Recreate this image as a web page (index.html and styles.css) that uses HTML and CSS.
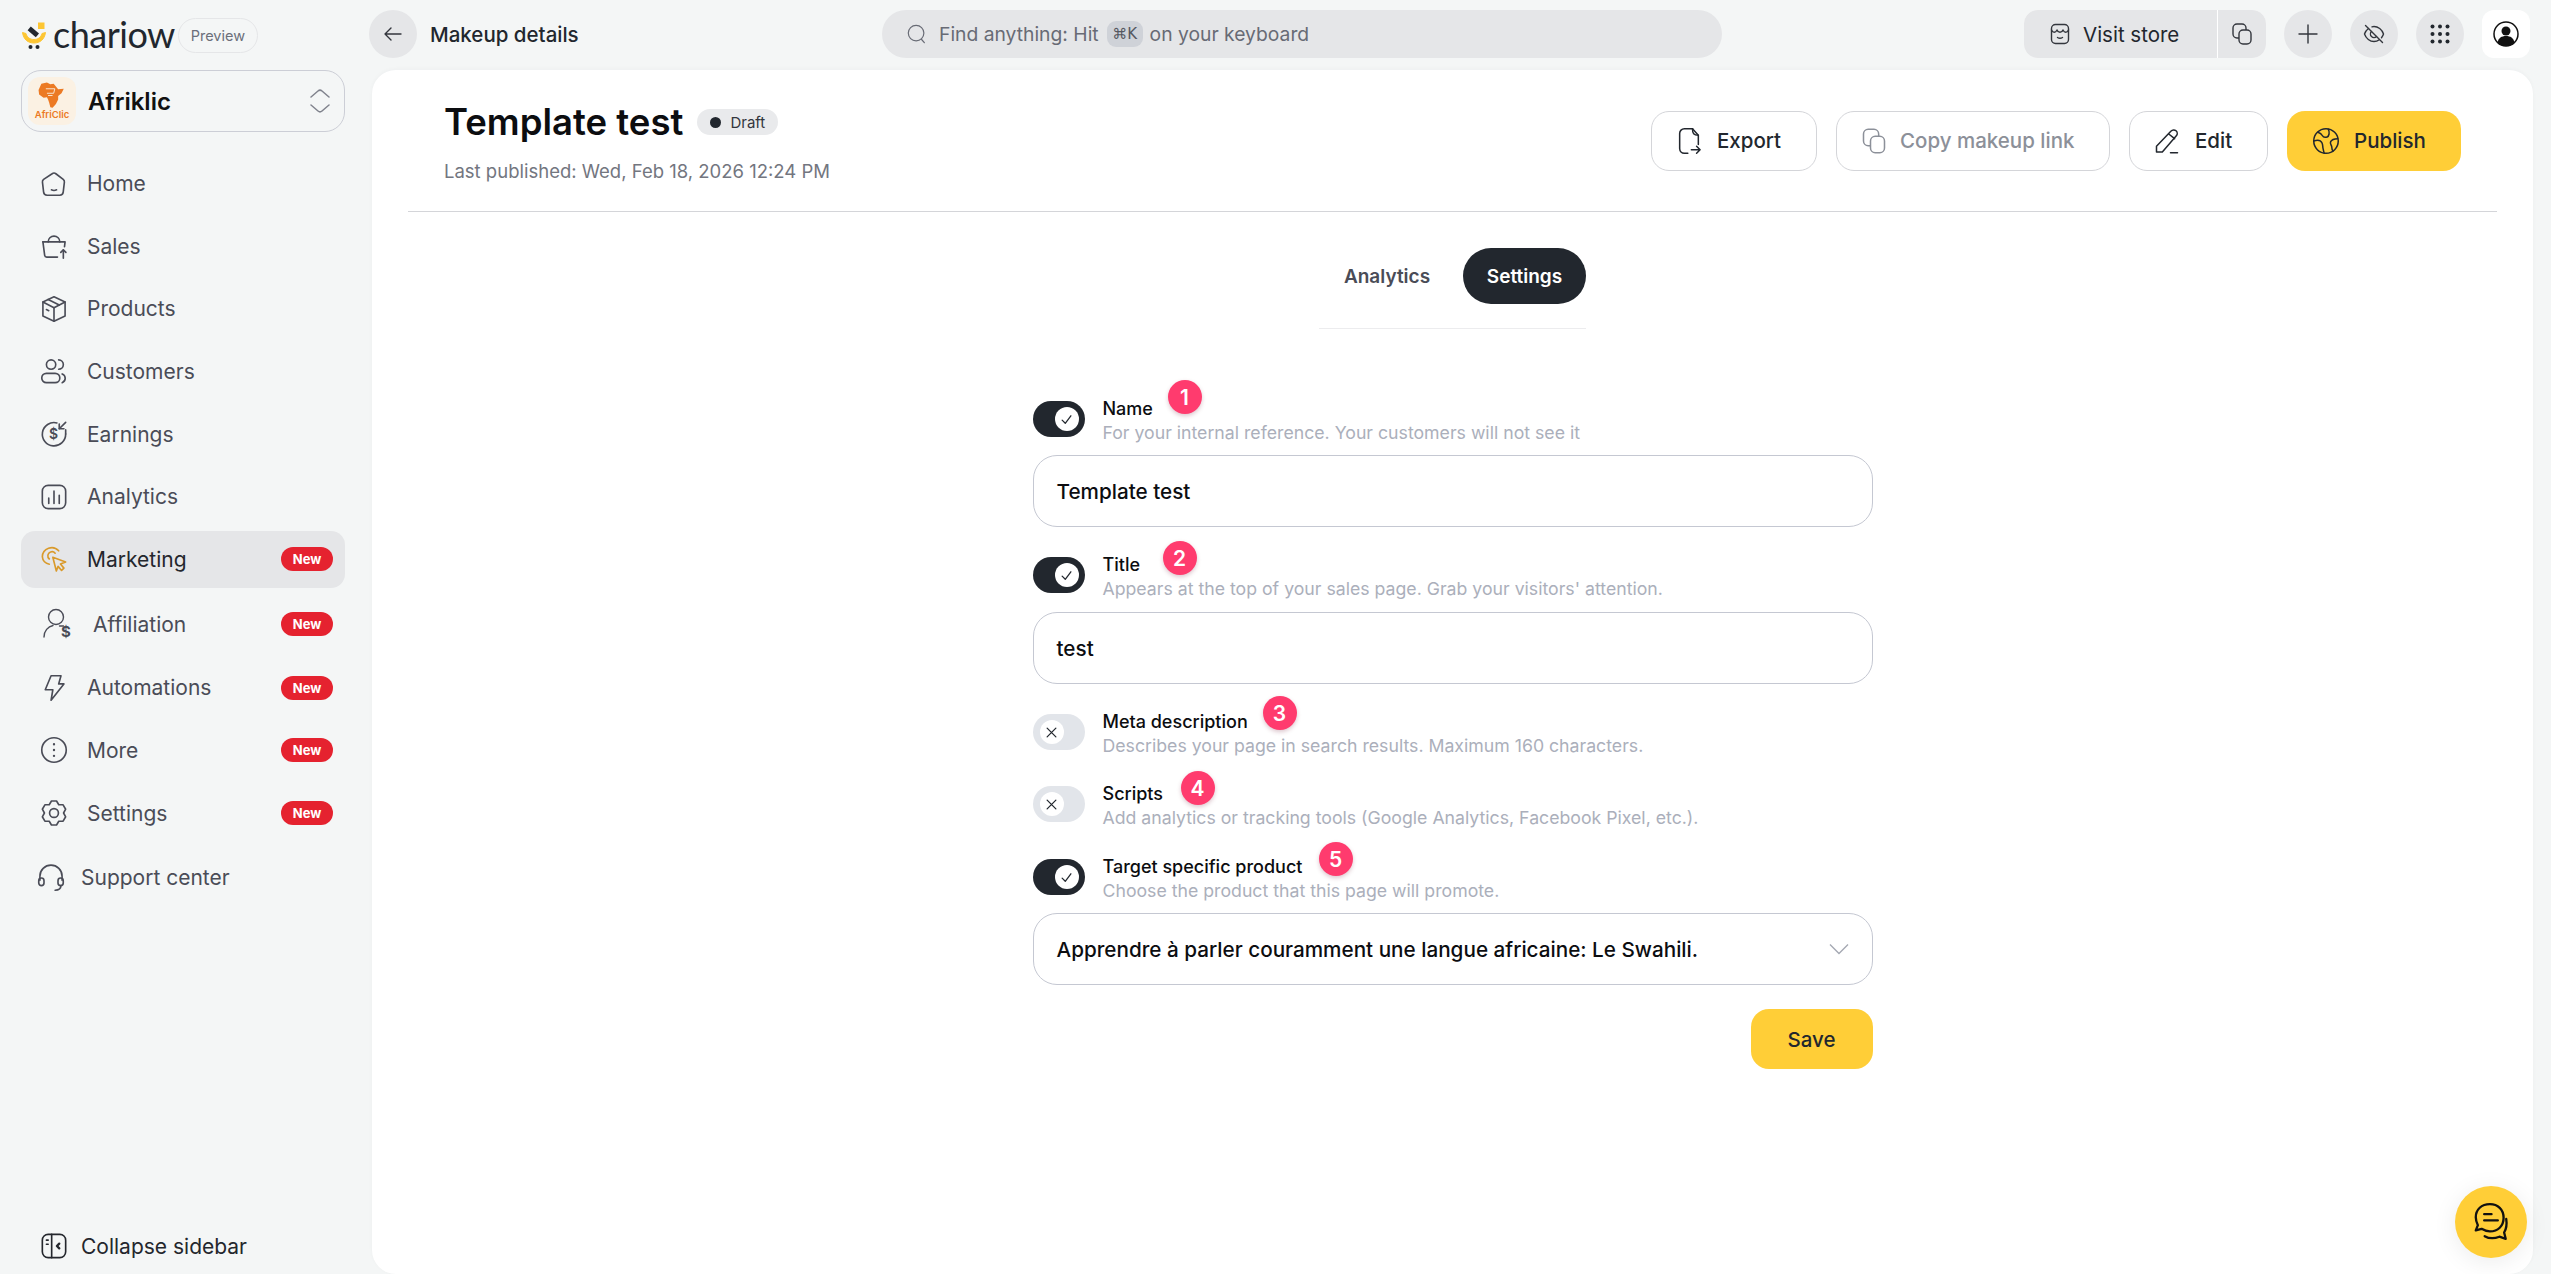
FILE: index.html
```html
<!DOCTYPE html>
<html lang="en">
<head>
  <meta charset="UTF-8">
  <meta name="viewport" content="width=device-width, initial-scale=1.0">
  <title>Makeup details</title>
  <link rel="stylesheet" href="styles.css">
</head>
<body>
  <aside class="sidebar">
    <div class="brand">
      <svg class="brand-mark" viewBox="0 0 26 28">
        <path d="M1.5 10.5c1 7 5.500 10.500 11.500 10.500s10.500-3.500 11.500-10.500l-3.500 1c-1 4-4 6-8 6s-7-2-8-6z" fill="#fdc633" stroke="#fdc633" stroke-linejoin="round"/>
        <path d="M9.8 4.500l8.200 7-3.200 3.700-8.200-7z" fill="#22272e"/>
        <rect x="17" y="0.5" width="6.500" height="6.500" fill="#fdc633"/>
        <circle cx="9.500" cy="25" r="2" fill="#22272e"/>
        <circle cx="16.500" cy="25" r="2" fill="#22272e"/>
      </svg>
      <span class="brand-name">chariow</span>
      <span class="preview-pill">Preview</span>
    </div>

    <div class="store-select">
      <div class="store-logo">
        <svg viewBox="5 0 25 24" class="store-africa">
          <path d="M8 1.500l5-1 3 1.500 3-.5 2 2.500 2 2.500 5-.5-2 4-3 2.500v3l-2 4-3 3.500-2-.5-1-4-1-3-1-2-3 .5-4-3-.5-4z" fill="#ec7a24"/>
          <path d="M12 6h8l-1 4h-6M14 12h4" fill="none" stroke="#fbf1e3" stroke-width="0.8"/>
        </svg>
        <span class="store-logo-text">AfriClic</span>
      </div>
      <span class="store-name">Afriklic</span>
      <svg class="store-arrows" viewBox="0 0 20 24" fill="none" stroke="#80838d" stroke-width="1.5" stroke-linecap="round" stroke-linejoin="round"><path d="M1 8l7-6a3 3 0 0 1 4 0l7 6"/><path d="M1 16l7 6a3 3 0 0 0 4 0l7-6"/></svg>
    </div>

    <nav class="nav">
      <a class="nav-item">
        <svg class="nav-icon" viewBox="0 0 24 24"><path d="M10.400 2.700a2.600 2.600 0 0 1 3.200 0l6.300 4.800a2.600 2.600 0 0 1 1 2.400l-1 8.600a3 3 0 0 1-3 2.600H6.100a3 3 0 0 1-3-2.600l-1-8.600a2.600 2.600 0 0 1 1-2.400z" transform="translate(0 0.5)"/><path d="M9.800 17c1.400.7 3 .7 4.400 0"/></svg>
        <span>Home</span>
      </a>
      <a class="nav-item">
        <svg class="nav-icon" viewBox="0 0 24 24"><path d="M2.500 8.500h19l-.5 4"/><path d="M2.500 8.500L4 20a1.800 1.800 0 0 0 1.800 1.500H15"/><path d="M7 8.500a5 5 0 0 1 10 0"/><path d="M20 22.500v-7"/><path d="M17.800 17.500l2.200-2.200 2.200 2.200"/></svg>
        <span>Sales</span>
      </a>
      <a class="nav-item">
        <svg class="nav-icon" viewBox="0 0 24 24"><path d="M12 1.500l9.500 4.500v12L12 22.500 2.500 18V6z"/><path d="M2.500 6L12 11l9.500-5"/><path d="M12 11v11.500"/><path d="M7 3.800l9.500 4.800"/><path d="M5.500 12.500l2 1"/></svg>
        <span>Products</span>
      </a>
      <a class="nav-item">
        <svg class="nav-icon" viewBox="0 0 24 24"><circle cx="9.500" cy="6.500" r="4"/><rect x="1.500" y="14" width="15.500" height="8" rx="4"/><path d="M16 2.500a4 4 0 0 1 0 8"/><path d="M19 14.500a4 4 0 0 1 0 7.500"/></svg>
        <span>Customers</span>
      </a>
      <a class="nav-item">
        <svg class="nav-icon" viewBox="0 0 24 24"><path d="M14.500 2.500A10 10 0 1 0 22 12"/><path d="M22 8.500v3.500"/><path d="M22 2l-5.500 5.500"/><path d="M16.500 3.500v4h4"/><text x="7.700" y="16.300" class="icon-text">$</text></svg>
        <span>Earnings</span>
      </a>
      <a class="nav-item">
        <svg class="nav-icon" viewBox="0 0 24 24"><rect x="2" y="2" width="20" height="20" rx="5"/><path d="M7.500 13v4.500M12 7v10.500M16.500 10.500v7"/></svg>
        <span>Analytics</span>
      </a>
      <a class="nav-item nav-active">
        <svg class="nav-icon icon-orange" viewBox="0 0 24 24"><path d="M8 16.500A7 7 0 0 1 2 10a8 8 0 0 1 14-5"/><path d="M8 12a3.500 3.500 0 0 1 1-6 3.500 3.500 0 0 1 4 1"/><path d="M11 10.500l11 4-4.500 1.800 3 3.500-2 2-3-3.500-1.500 4z"/></svg>
        <span>Marketing</span>
        <span class="new-badge">New</span>
      </a>
      <a class="nav-item nav-affiliation">
        <svg class="nav-icon" viewBox="0 0 30 36"><circle cx="14" cy="11" r="7.500"/><path d="M2 31c0-6 4-10.500 9-11.500"/><path d="M17.500 20h4"/><text x="19" y="31" class="icon-text icon-text-bold">$</text></svg>
        <span>Affiliation</span>
        <span class="new-badge">New</span>
      </a>
      <a class="nav-item">
        <svg class="nav-icon" viewBox="0 0 24 24"><path d="M9.500 1.500h8.500l-2 7h4.500L9.500 22.500l1.500-9H4.500z"/></svg>
        <span>Automations</span>
        <span class="new-badge">New</span>
      </a>
      <a class="nav-item">
        <svg class="nav-icon" viewBox="0 0 24 24"><circle cx="12" cy="12" r="10.500"/><path d="M12 7v.1M12 12v.1M12 17v.1" stroke-width="2"/></svg>
        <span>More</span>
        <span class="new-badge">New</span>
      </a>
      <a class="nav-item">
        <svg class="nav-icon" viewBox="0 0 24 24"><path d="M9.820 1.730h4.360L16.100 4.900l3.700.07 2.190 3.790L20.200 12l1.790 3.240-2.190 3.790-3.700.07-1.920 3.170H9.820L7.900 19.100l-3.700-.07-2.190-3.790L3.800 12 2.010 8.760l2.190-3.790 3.700-.07z"/><circle cx="12" cy="12" r="3.800"/></svg>
        <span>Settings</span>
        <span class="new-badge">New</span>
      </a>
      <a class="nav-item nav-support">
        <svg class="nav-icon" viewBox="0 0 24 24"><path d="M2.500 14V10.500a9.500 9.500 0 0 1 19 0V14"/><rect x="1.500" y="12" width="4.500" height="6.500" rx="2.250"/><rect x="18" y="12" width="4.500" height="6.500" rx="2.250"/><path d="M20.500 18.500c0 2.500-2 4-5 4"/></svg>
        <span>Support center</span>
      </a>
    </nav>

    <a class="collapse-link">
      <svg class="nav-icon" viewBox="0 0 24 24"><rect x="2" y="2" width="20" height="20" rx="5"/><path d="M10 2v20M5.500 7h1.500M5.500 10.500h1.500"/><path d="M16.500 10l-2 2 2 2" stroke-width="2"/></svg>
      <span>Collapse sidebar</span>
    </a>
  </aside>

  <div class="workspace">
    <header class="topbar">
      <div class="topbar-left">
        <button class="round-btn">
          <svg class="top-icon" viewBox="0 0 24 24"><path d="M20 12H4M10 6l-6 6 6 6"/></svg>
        </button>
        <span class="page-name">Makeup details</span>
      </div>
      <div class="search">
        <svg class="search-icon" viewBox="0 0 24 24"><circle cx="11" cy="11" r="8.500"/><path d="M17 18l3 3.500"/></svg>
        <span>Find anything: Hit</span>
        <kbd class="kbd">⌘K</kbd>
        <span>on your keyboard</span>
      </div>
      <div class="topbar-right">
        <div class="store-group">
          <button class="visit-btn">
            <svg class="top-icon" viewBox="0 0 24 24"><rect x="3.500" y="2.500" width="17" height="19" rx="4"/><path d="M3.500 8c1.500 3 4 3 5.500 0 1 3 5 3 6 0 1.500 3 4 3 5.500 0"/><path d="M9.500 15.500c1.500 1 3.500 1 5 0"/></svg>
            <span>Visit store</span>
          </button>
          <button class="copy-btn">
            <svg class="top-icon" viewBox="0 0 24 24"><rect x="3" y="2" width="13" height="14" rx="4"/><rect x="9" y="8" width="12" height="14" rx="4" fill="#e5e6e8"/></svg>
          </button>
        </div>
        <button class="round-btn">
          <svg class="top-icon" viewBox="0 0 24 24"><path d="M12 3v18M3 12h18"/></svg>
        </button>
        <button class="round-btn">
          <svg class="top-icon" viewBox="0 0 24 24"><path d="M3.500 3.500l17 17"/><path d="M6.500 6.500C4.500 8 3 10 2.500 12c1.500 4.500 5.500 7.500 9.500 7.500 2 0 3.800-.7 5.300-1.800"/><path d="M10 4.800c.7-.2 1.300-.3 2-.3 4 0 8 3 9.500 7.500-.4 1.300-1.100 2.600-2 3.700"/><path d="M9.500 9.500a3.500 3.500 0 0 0 5 5"/></svg>
        </button>
        <button class="round-btn">
          <svg class="top-icon" viewBox="0 0 24 24"><g class="dots"><circle cx="4.500" cy="4.500" r="2"/><circle cx="12" cy="4.500" r="2"/><circle cx="19.500" cy="4.500" r="2"/><circle cx="4.500" cy="12" r="2"/><circle cx="12" cy="12" r="2"/><circle cx="19.500" cy="12" r="2"/><circle cx="4.500" cy="19.500" r="2"/><circle cx="12" cy="19.500" r="2"/><circle cx="19.500" cy="19.500" r="2"/></g></svg>
        </button>
        <button class="avatar-btn">
          <svg class="avatar-icon" viewBox="0 0 26 26"><circle cx="13" cy="13" r="12" fill="#fff" stroke="#111" stroke-width="1.5"/><circle cx="13" cy="10" r="4.500" fill="#111"/><path d="M4.500 21.500c1-4.500 4-6.500 8.500-6.500s7.500 2 8.500 6.500a12 12 0 0 1-17 0z" fill="#111"/></svg>
        </button>
      </div>
    </header>

    <main class="card">
      <section class="page-head">
        <div class="page-head-text">
          <div class="title-line">
            <h1>Template test</h1>
            <span class="status-pill"><i class="status-dot"></i>Draft</span>
          </div>
          <p class="published">Last published: Wed, Feb 18, 2026 12:24 PM</p>
        </div>
        <div class="actions">
          <button class="btn btn-export">
            <svg class="btn-icon" viewBox="0 0 24 24"><path d="M15 1.500H8a4 4 0 0 0-4 4v13a4 4 0 0 0 4 4h3"/><path d="M15 1.500l5 5.500v8"/><path d="M15 1.500c0 4 1 5.500 5 5.500"/><path d="M14 19.500h7M18.500 16.500l3 3-3 3"/></svg>
            <span>Export</span>
          </button>
          <button class="btn btn-copy">
            <svg class="btn-icon" viewBox="0 0 24 24"><rect x="3" y="2" width="13" height="14" rx="4"/><rect x="9" y="8" width="12" height="14" rx="4" fill="#fff"/></svg>
            <span>Copy makeup link</span>
          </button>
          <button class="btn btn-edit">
            <svg class="btn-icon" viewBox="0 0 24 24"><path d="M15.500 3.500a3 3 0 0 1 4.500 4L8 21.500H3V16.500z"/><path d="M13.500 6l5 4"/><path d="M15 22h6"/></svg>
            <span>Edit</span>
          </button>
          <button class="btn btn-publish">
            <svg class="btn-icon" viewBox="0 0 24 24"><circle cx="12" cy="12" r="10.500"/><path d="M5 4.500c2 .5 3 1 4 3s2.500 1.500 4 1 2.500-4 1-6.500"/><path d="M1.500 12c3-1 6-.5 7 1.500s.5 3 1 5 .5 3 1 4"/><path d="M22 10c-3 0-5 .5-6 2.500s1 3 1 5 .5 2.500 1 3"/></svg>
            <span>Publish</span>
          </button>
        </div>
      </section>

      <div class="tabs">
        <button class="tab">Analytics</button>
        <button class="tab tab-active">Settings</button>
      </div>

      <form class="form">
        <div class="field">
          <div class="field-head">
            <span class="toggle toggle-on"><span class="knob"><svg viewBox="0 0 12 12"><path d="M2.500 6.500L5 9l4.500-6"/></svg></span></span>
            <div class="field-text">
              <label>Name</label>
              <small>For your internal reference. Your customers will not see it</small>
            </div>
          </div>
          <span class="step step-1">1</span>
          <div class="input">Template test</div>
        </div>

        <div class="field field-title">
          <div class="field-head">
            <span class="toggle toggle-on"><span class="knob"><svg viewBox="0 0 12 12"><path d="M2.500 6.500L5 9l4.500-6"/></svg></span></span>
            <div class="field-text">
              <label>Title</label>
              <small>Appears at the top of your sales page. Grab your visitors' attention.</small>
            </div>
          </div>
          <span class="step step-2">2</span>
          <div class="input">test</div>
        </div>

        <div class="field">
          <div class="field-head">
            <span class="toggle"><span class="knob"><svg viewBox="0 0 12 12"><path d="M2.500 2.500l7 7M9.500 2.500l-7 7"/></svg></span></span>
            <div class="field-text">
              <label>Meta description</label>
              <small>Describes your page in search results. Maximum 160 characters.</small>
            </div>
          </div>
          <span class="step step-3">3</span>
        </div>

        <div class="field field-scripts">
          <div class="field-head">
            <span class="toggle"><span class="knob"><svg viewBox="0 0 12 12"><path d="M2.500 2.500l7 7M9.500 2.500l-7 7"/></svg></span></span>
            <div class="field-text">
              <label>Scripts</label>
              <small>Add analytics or tracking tools (Google Analytics, Facebook Pixel, etc.).</small>
            </div>
          </div>
          <span class="step step-4">4</span>
        </div>

        <div class="field field-target">
          <div class="field-head">
            <span class="toggle toggle-on"><span class="knob"><svg viewBox="0 0 12 12"><path d="M2.500 6.500L5 9l4.500-6"/></svg></span></span>
            <div class="field-text">
              <label>Target specific product</label>
              <small>Choose the product that this page will promote.</small>
            </div>
          </div>
          <span class="step step-5">5</span>
          <div class="input input-select">
            <span>Apprendre à parler couramment une langue africaine: Le Swahili.</span>
            <svg class="select-arrow" viewBox="0 0 20 12"><path d="M1 1.500l9 9 9-9"/></svg>
          </div>
        </div>

        <div class="form-foot">
          <button type="button" class="btn btn-save">Save</button>
        </div>
      </form>

      <button class="chat-btn">
        <svg viewBox="0 0 40 40" class="chat-icon"><path d="M19 3c-8 0-13.500 5-13.500 12.500 0 3 1 5.500 2 7.500l-2 5 5.500-1.500c2.500 1.500 5 2.500 8 2.500 7.500 0 13-5 13-13S26.500 3 19 3z"/><path d="M13.500 12.500h7M13.500 18.500h13"/><path d="M34.500 17c1 6.500-.5 10.500-2 13l1.500 6-6-2c-4.500 1.800-10 1.800-14-.5"/></svg>
      </button>
    </main>
  </div>
</body>
</html>
```

FILE: styles.css
```css
* {
  box-sizing: border-box;
}

html, body {
  height: 100%;
}

body {
  margin: 0;
  display: flex;
  overflow: hidden;
  background: #f4f6f6;
  color: #22272e;
  font-family: "Inter", "Liberation Sans", sans-serif;
}

button {
  border: none;
  background: none;
  padding: 0;
  font: inherit;
  color: inherit;
  cursor: pointer;
}

svg {
  display: block;
  flex: none;
}

/* Sidebar */
.sidebar {
  width: 372px;
  flex: none;
  display: flex;
  flex-direction: column;
  padding: 0 27px 0 21px;
}

.brand {
  height: 70px;
  display: flex;
  align-items: center;
}

.brand-mark {
  width: 26px;
  height: 28px;
  margin-top: 1px;
}

.brand-name {
  margin-left: 6px;
  margin-top: -3px;
  font-family: "Lato", sans-serif;
  font-size: 36px;
  letter-spacing: -0.5px;
  line-height: 1;
  color: #22272e;
}

.preview-pill {
  margin-left: 3px;
  height: 35px;
  width: 80px;
  border: 1px solid #e5e6e8;
  border-radius: 18px;
  display: flex;
  align-items: center;
  justify-content: center;
  font-size: 14.5px;
  color: #6b6f7a;
}

.store-select {
  height: 62px;
  border: 1px solid #ccced6;
  border-radius: 20px;
  display: flex;
  align-items: center;
  padding: 0 14px 0 6px;
}

.store-logo {
  width: 48px;
  height: 48px;
  border-radius: 12px;
  background: #fbf1e3;
  display: flex;
  flex-direction: column;
  align-items: center;
  padding-top: 5px;
}

.store-africa {
  width: 28px;
  height: 27px;
}

.store-logo-text {
  font-size: 9.5px;
  font-weight: 600;
  color: #ec7a24;
  line-height: 11px;
}

.store-name {
  margin-left: 12px;
  font-size: 24px;
  font-weight: 600;
  color: #111;
  flex: 1;
}

.store-arrows {
  width: 20px;
  height: 24px;
}

.nav {
  margin-top: 23px;
  display: flex;
  flex-direction: column;
  gap: 5.67px;
}

.nav-item {
  height: 57px;
  display: flex;
  align-items: center;
  padding: 0 12px 0 19px;
  border-radius: 14px;
  font-size: 21px;
  color: #4a4c57;
}

.nav-icon {
  width: 28px;
  height: 28px;
  margin-right: 19px;
  fill: none;
  stroke: currentColor;
  stroke-width: 1.4;
  stroke-linecap: round;
  stroke-linejoin: round;
}

.icon-text {
  font-family: "Inter", sans-serif;
  font-size: 12px;
  fill: currentColor;
  stroke: none;
  font-weight: 600;
}

.icon-text-bold {
  font-size: 15px;
  font-weight: 700;
}

.icon-orange {
  color: #d99a2b;
}

.nav-active {
  background: #e5e6e8;
  color: #24272d;
}

.nav-affiliation {
  height: 59px;
  margin-top: 1px;
}

.nav-affiliation .nav-icon {
  width: 30px;
  height: 36px;
  margin-left: 2px;
  margin-right: 21px;
}

.nav-support {
  margin-top: 2px;
  padding-left: 16px;
}

.nav-support .nav-icon {
  margin-right: 16px;
}

.new-badge {
  margin-left: auto;
  width: 52px;
  height: 24px;
  border-radius: 12px;
  background: #e5222f;
  color: #fff;
  font-size: 13px;
  font-weight: 700;
  display: flex;
  align-items: center;
  justify-content: center;
}

.collapse-link {
  margin-top: auto;
  margin-bottom: 14px;
  padding-left: 19px;
  height: 28px;
  display: flex;
  align-items: center;
  font-size: 21px;
  color: #24272d;
}

.collapse-link .nav-icon {
  margin-right: 13px;
}

/* Top bar */
.workspace {
  flex: 1;
  min-width: 0;
  display: flex;
  flex-direction: column;
}

.topbar {
  height: 70px;
  flex: none;
  display: flex;
  align-items: flex-start;
  padding: 10px 21px 0 0;
  margin-left: -3px;
}

.topbar-left {
  width: 513px;
  display: flex;
  align-items: center;
  gap: 13px;
}

.round-btn {
  width: 48px;
  height: 48px;
  border-radius: 50%;
  background: #e5e6e8;
  display: flex;
  align-items: center;
  justify-content: center;
}

.top-icon {
  width: 24px;
  height: 24px;
  fill: none;
  stroke: #33363d;
  stroke-width: 1.4;
  stroke-linecap: round;
  stroke-linejoin: round;
}

.dots {
  fill: #22272e;
  stroke: none;
}

.page-name {
  font-size: 20.5px;
  font-weight: 500;
  color: #22272e;
}

.search {
  width: 840px;
  height: 48px;
  border-radius: 24px;
  background: #e5e6e8;
  display: flex;
  align-items: center;
  padding-left: 24px;
  font-size: 19.3px;
  color: #686b75;
}

.search-icon {
  width: 22px;
  height: 24px;
  margin-right: 11px;
  fill: none;
  stroke: #686b75;
  stroke-width: 1.3;
  stroke-linecap: round;
}

.kbd {
  width: 36px;
  height: 26px;
  margin: 0 7px 0 8px;
  border-radius: 9px;
  background: #cfd2d8;
  font-family: "DejaVu Sans", sans-serif;
  font-size: 15px;
  color: #555861;
  display: flex;
  align-items: center;
  justify-content: center;
}

.topbar-right {
  margin-left: auto;
  display: flex;
  gap: 18px;
}

.store-group {
  display: flex;
  gap: 1px;
  background: #fff;
  border-radius: 14px;
}

.visit-btn {
  width: 193px;
  height: 48px;
  border-radius: 14px 0 0 14px;
  background: #e5e6e8;
  display: flex;
  align-items: center;
  gap: 11px;
  padding-left: 24px;
  font-size: 20.5px;
  color: #22272e;
}

.copy-btn {
  width: 48px;
  height: 48px;
  border-radius: 0 14px 14px 0;
  background: #e5e6e8;
  display: flex;
  align-items: center;
  justify-content: center;
}

.avatar-btn {
  width: 48px;
  height: 48px;
  border-radius: 12px;
  background: #fff;
  display: flex;
  align-items: center;
  justify-content: center;
}

.avatar-icon {
  width: 26px;
  height: 26px;
}

/* Main card */
.card {
  flex: 1;
  min-height: 0;
  width: 2161px;
  position: relative;
  background: #fff;
  border-radius: 24px;
  box-shadow: 0 -1px 4px rgba(30, 40, 50, 0.03);
}

.page-head {
  height: 142px;
  margin: 0 36px;
  border-bottom: 1px solid #d4d5d9;
  display: flex;
  justify-content: space-between;
  align-items: flex-start;
}

.page-head-text {
  padding: 30px 0 0 36px;
}

.title-line {
  display: flex;
  align-items: center;
  gap: 14px;
  height: 44px;
}

h1 {
  margin: 0;
  font-size: 36.5px;
  font-weight: 600;
  color: #0c0d10;
}

.status-pill {
  width: 81px;
  height: 26px;
  border-radius: 13px;
  background: #e9eaec;
  display: flex;
  align-items: center;
  justify-content: center;
  gap: 9px;
  font-size: 15px;
  color: #33363d;
}

.status-dot {
  width: 11px;
  height: 11px;
  border-radius: 50%;
  background: #22272e;
}

.published {
  margin: 16px 0 0;
  font-size: 18.5px;
  color: #73767f;
}

.actions {
  margin-top: 41px;
  margin-right: 36px;
  display: flex;
  gap: 19px;
}

.btn {
  height: 60px;
  border-radius: 18px;
  border: 1px solid #d4d5d9;
  background: #fff;
  display: flex;
  align-items: center;
  justify-content: center;
  font-size: 20.5px;
  font-weight: 500;
  color: #22272e;
}

.btn span {
  margin-bottom: 2px;
}

.actions .btn {
  justify-content: flex-start;
  padding-left: 23px;
  gap: 14px;
}

.btn-icon {
  width: 28px;
  height: 28px;
  fill: none;
  stroke: currentColor;
  stroke-width: 1.3;
  stroke-linecap: round;
  stroke-linejoin: round;
}

.btn-export {
  width: 166px;
}

.actions .btn-copy {
  width: 274px;
  gap: 12px;
  color: #8c9099;
}

.btn-edit {
  width: 139px;
}

.actions .btn-publish {
  width: 174px;
  padding-left: 25px;
  border: none;
  background: #ffce37;
}

.tabs {
  width: 267px;
  margin: 36px auto 0;
  padding-bottom: 24px;
  border-bottom: 1px solid #ececee;
  display: flex;
  justify-content: flex-end;
  gap: 8px;
}

.tab {
  width: 136px;
  height: 56px;
  border-radius: 28px;
  font-size: 19px;
  font-weight: 600;
  color: #4a4c57;
}

.tab-active {
  width: 123px;
  background: #22272e;
  color: #fff;
}

/* Form */
.form {
  width: 840px;
  margin: 68px auto 0;
}

.field {
  position: relative;
  margin-bottom: 26px;
}

.field-scripts {
  margin-top: -2px;
}

.field-target {
  margin-top: -1px;
}

.field-title .input {
  margin-top: 11px;
}

.field-head {
  display: flex;
  gap: 18px;
}

.toggle {
  width: 52px;
  height: 36px;
  margin-top: 4px;
  border-radius: 18px;
  background: #e2e5ea;
  display: flex;
  align-items: center;
  justify-content: flex-start;
  padding: 0 6px 0 7px;
}

.toggle-on {
  background: #22272e;
  justify-content: flex-end;
}

.knob {
  width: 24px;
  height: 24px;
  border-radius: 50%;
  background: #fff;
  display: flex;
  align-items: center;
  justify-content: center;
}

.knob svg {
  width: 15px;
  height: 15px;
  fill: none;
  stroke: #22272e;
  stroke-width: 1;
  stroke-linecap: round;
  stroke-linejoin: round;
}

.field-text {
  display: flex;
  flex-direction: column;
}

.field-text label {
  font-size: 18px;
  line-height: 24px;
  font-weight: 450;
  color: #0c0d10;
}

.field-text small {
  font-size: 17.7px;
  line-height: 24px;
  color: #abafbb;
}

.step {
  position: absolute;
  width: 34px;
  height: 34px;
  border-radius: 50%;
  background: #ff3b6e;
  color: #fff;
  font-size: 21px;
  font-weight: 600;
  display: flex;
  align-items: center;
  justify-content: center;
  box-shadow: 0 2px 4px rgba(120, 30, 60, 0.25);
}

.step-1 { left: 135px; top: -17px; }
.step-2 { left: 130px; top: -12px; }
.step-3 { left: 230px; top: -14px; }
.step-4 { left: 148px; top: -11px; }
.step-5 { left: 286px; top: -13px; }

.input {
  margin-top: 10px;
  height: 72px;
  border: 1px solid #c5c8d2;
  border-radius: 24px;
  display: flex;
  align-items: center;
  padding: 0 23px;
  font-size: 20.7px;
  font-weight: 500;
  color: #0c0d10;
}

.input-select {
  justify-content: space-between;
}

.select-arrow {
  width: 20px;
  height: 12px;
  fill: none;
  stroke: #a5a9b3;
  stroke-width: 1.4;
}

.form-foot {
  margin-top: -2px;
  display: flex;
  justify-content: flex-end;
}

.btn-save {
  width: 122px;
  border: none;
  background: #ffce37;
}

.chat-btn {
  position: absolute;
  right: 6px;
  bottom: 16px;
  width: 72px;
  height: 72px;
  border-radius: 50%;
  background: #ffce37;
  display: flex;
  align-items: center;
  justify-content: center;
  box-shadow: 0 4px 24px rgba(0, 0, 0, 0.08);
}

.chat-icon {
  width: 42px;
  height: 42px;
  fill: none;
  stroke: #111;
  stroke-width: 2.2;
  stroke-linecap: round;
  stroke-linejoin: round;
}
```
